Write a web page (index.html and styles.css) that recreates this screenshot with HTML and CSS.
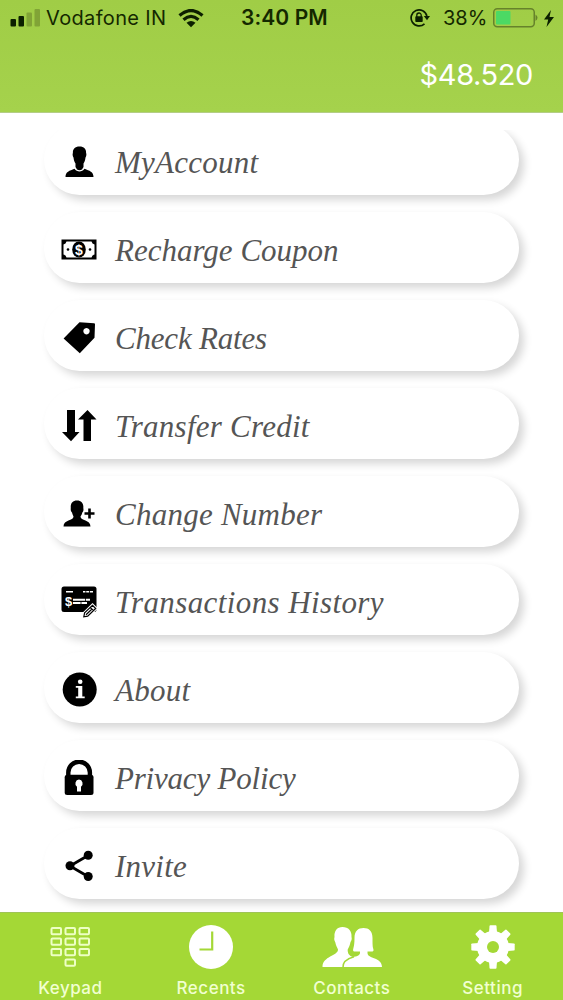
FILE: index.html
```html
<!DOCTYPE html>
<html lang="en">
<head>
    <meta charset="UTF-8">
    <meta name="viewport" content="width=device-width, initial-scale=1.0">
    <title>Setting</title>
    <link rel="stylesheet" href="styles.css">
</head>
<body>
    <header class="header">
        <div class="status">
            <svg class="signal" width="30" height="18" viewBox="0 0 30 18">
                <rect x="0.5" y="10" width="5.5" height="7.5" rx="1" fill="#0c2000"/>
                <rect x="8.5" y="7" width="5.5" height="10.5" rx="1" fill="#0c2000"/>
                <rect x="16.5" y="3.5" width="5.5" height="14" rx="1" fill="#81a436"/>
                <rect x="24.5" y="0" width="5.5" height="17.5" rx="1" fill="#81a436"/>
            </svg>
            <span class="carrier">Vodafone IN</span>
            <svg class="wifi" width="26" height="19" viewBox="0 0 26 19">
                <path d="M1.5 6.5Q13-3.5 24.5 6.5M5.5 10.7Q13 4.2 20.5 10.7" fill="none" stroke="#0c2000" stroke-width="3.2"/>
                <path d="M8.5 13.7Q13 10.3 17.5 13.7L13 18.3Z" fill="#0c2000"/>
            </svg>
            <span class="time">3:40 PM</span>
            <svg class="rotation" width="20" height="20" viewBox="0 0 20 20">
                <path d="M16.9 8A8 8 0 1 0 14.5 15.8" fill="none" stroke="#0c2000" stroke-width="1.7"/>
                <path d="M13.8 8H20L17 12.2Z" fill="#0c2000"/>
                <rect x="5.3" y="8.3" width="7.4" height="5.7" rx="0.8" fill="#0c2000"/>
                <path d="M6.8 9V7.2a2.2 2.2 0 0 1 4.4 0V9" fill="none" stroke="#0c2000" stroke-width="1.3"/>
            </svg>
            <span class="percent">38%</span>
            <svg class="battery" width="46" height="20" viewBox="0 0 46 20">
                <rect x="0.75" y="0.75" width="40.5" height="18" rx="3.5" fill="none" stroke="#66822b" stroke-width="1.5"/>
                <rect x="3" y="3" width="14.5" height="13.5" rx="1" fill="#4cd964"/>
                <path d="M42.5 6.5Q46.5 9.7 42.5 13Z" fill="#66822b"/>
            </svg>
            <svg class="bolt" width="10" height="17" viewBox="0 0 10 17">
                <path d="M7 0L0 9.5H4.2L2.5 17L10 7H5.5Z" fill="#0c2000"/>
            </svg>
        </div>
        <div class="balance">$48.520</div>
    </header>

    <main class="menu">
        <a class="item">
            <svg width="36" height="36" viewBox="0 0 36 36">
                <path d="M18.5 2.5C14 2.5 11.7 5 11.9 9C11.3 10 11.7 12.5 12.5 13.5C12.8 17 14 18.5 14.5 19.5V23L16 25.5Q18.5 27 21 25.5L22.5 23V19.5C23 18.5 24.2 17 24.5 13.5C25.3 12.5 25.7 10 25.1 9C25.3 5 23 2.5 18.5 2.5ZM4.5 33C4.5 27.8 8.5 26.8 13.5 24.8C16 28.3 21 28.3 23.5 24.8C28.5 26.8 32.5 27.8 32.5 33Z"/>
            </svg>
            <span>MyAccount</span>
        </a>
        <a class="item">
            <svg width="36" height="36" viewBox="0 0 36 36">
                <path d="M0.5 7.5H35.5V27.5H0.5Z"/>
                <path d="M5.5 9.5H30.5A4 4 0 0 0 33.5 12.5V22.5A4 4 0 0 0 30.5 25.5H5.5A4 4 0 0 0 2.5 22.5V12.5A4 4 0 0 0 5.5 9.5Z" fill="#fff"/>
                <ellipse cx="18" cy="17.5" rx="6.8" ry="8"/>
                <circle cx="7" cy="17.5" r="1.3"/>
                <circle cx="29" cy="17.5" r="1.3"/>
                <text class="bold" x="18" y="22.5" font-size="14" text-anchor="middle" fill="#fff">$</text>
            </svg>
            <span class="snug">Recharge Coupon</span>
        </a>
        <a class="item">
            <svg width="36" height="36" viewBox="0 0 36 36">
                <path fill-rule="evenodd" d="M18.5 2.2L33 3.2Q34 3.3 34 4.3L33.5 17.7L18.8 33.3L2.6 18.5ZM25.5 8a3.2 3.2 0 1 0 0.01 0Z"/>
            </svg>
            <span class="tight">Check Rates</span>
        </a>
        <a class="item">
            <svg width="36" height="36" viewBox="0 0 36 36">
                <path d="M6 2H14V24H18.5L10 33.3L1 24H6Z"/>
                <path d="M26.5 2L35.5 11.5H30V33H22.5V11.5H17Z"/>
            </svg>
            <span>Transfer Credit</span>
        </a>
        <a class="item">
            <svg width="36" height="36" viewBox="0 0 36 36">
                <path d="M16 4.5C11.5 4.5 9.3 7.5 9.8 12C9.4 14.5 10.3 15.8 11 16.5C11.5 19 12.5 19.7 12.5 20.5C12.5 25 2.5 23.5 2.5 30.5H29.5C29.5 23.5 19.5 25 19.5 20.5C20 19.5 21 18.5 21.3 16.5C22.2 15.5 22.8 14 22.3 12C22.8 7.5 20.5 4.5 16 4.5Z"/>
                <path d="M28.5 12.5V22.5M23.5 17.5H33.5" stroke="#000" stroke-width="2.6"/>
            </svg>
            <span>Change Number</span>
        </a>
        <a class="item">
            <svg width="36" height="36" viewBox="0 0 36 36">
                <rect x="0.5" y="2.5" width="35" height="25.5" rx="2.5"/>
                <path d="M5 7.7H12M22 7.7H32" stroke="#fff" stroke-width="1.6"/>
                <path d="M24.8 6V9M28.5 6V9" stroke="#000" stroke-width="0.8"/>
                <path d="M12 15.7H29M12 19H26" stroke="#fff" stroke-width="1.9"/>
                <path d="M20 17.5V20M24.5 14V17" stroke="#000" stroke-width="0.8"/>
                <text class="bold" x="7.5" y="21.5" font-size="13" text-anchor="middle" fill="#fff">$</text>
                <path d="M22.3 33.3L23.2 28.5L31.5 20.5L35.5 24.5L27 32.6Z" fill="#fff" stroke="#fff" stroke-width="2"/>
                <path d="M22.8 32.8L23.6 28.9L31.5 21.3L34.7 24.5L26.7 32.1ZM29.3 23.5L32.5 26.7M25 30.7L31 25" fill="none" stroke="#000" stroke-width="1.2"/>
            </svg>
            <span class="loose">Transactions History</span>
        </a>
        <a class="item">
            <svg width="36" height="36" viewBox="0 0 36 36">
                <circle cx="18.7" cy="17.5" r="17"/>
                <circle cx="19.2" cy="9.8" r="2.3" fill="#fff"/>
                <path d="M14.8 14H21.3V24.5H23.7V26.3H14.8V24.5H17.2V15.8H14.8Z" fill="#fff"/>
            </svg>
            <span>About</span>
        </a>
        <a class="item">
            <svg width="36" height="36" viewBox="0 0 36 36">
                <path d="M7.3 17V12.5a10.8 10.8 0 0 1 21.6 0V17" fill="none" stroke="#000" stroke-width="4.4"/>
                <rect x="3.7" y="14.8" width="28.8" height="20.2" rx="2.5"/>
                <path d="M18 19.5a4 4 0 0 1 2 7.2V31.5H16V26.7A4 4 0 0 1 18 19.5Z" fill="#fff"/>
            </svg>
            <span class="tight">Privacy Policy</span>
        </a>
        <a class="item">
            <svg width="36" height="36" viewBox="0 0 36 36">
                <path d="M27 7.5L9 18L27 28.5" fill="none" stroke="#000" stroke-width="2.8"/>
                <circle cx="27.2" cy="7.3" r="4.5"/>
                <circle cx="9" cy="17.8" r="4.5"/>
                <circle cx="27.2" cy="28.5" r="4.5"/>
            </svg>
            <span>Invite</span>
        </a>
    </main>

    <nav class="tabs">
        <a class="tab">
            <svg width="60" height="46" viewBox="0 0 60 46">
                <g fill="none" stroke="#edffc4" stroke-width="2">
                    <rect x="11.5" y="3" width="9.5" height="6.3" rx="1"/>
                    <rect x="25.5" y="3" width="9.5" height="6.3" rx="1"/>
                    <rect x="39.5" y="3" width="9.5" height="6.3" rx="1"/>
                    <rect x="11.5" y="13.5" width="9.5" height="6.3" rx="1"/>
                    <rect x="25.5" y="13.5" width="9.5" height="6.3" rx="1"/>
                    <rect x="39.5" y="13.5" width="9.5" height="6.3" rx="1"/>
                    <rect x="11.5" y="24" width="9.5" height="6.3" rx="1"/>
                    <rect x="25.5" y="24" width="9.5" height="6.3" rx="1"/>
                    <rect x="39.5" y="24" width="9.5" height="6.3" rx="1"/>
                    <rect x="25.5" y="34.5" width="9.5" height="6.3" rx="1"/>
                </g>
            </svg>
            <span>Keypad</span>
        </a>
        <a class="tab">
            <svg width="60" height="46" viewBox="0 0 60 46">
                <circle cx="30" cy="22" r="22" fill="#fff"/>
                <path d="M31.2 6.5V24.5H18.5" fill="none" stroke="#a4d836" stroke-width="2.2"/>
            </svg>
            <span>Recents</span>
        </a>
        <a class="tab">
            <svg width="60" height="46" viewBox="0 0 60 46">
                <path fill="#fff" d="M20.5 2C15 2 12 6 12.5 12C12 13.5 12.2 15.5 13.2 17C14 21 15.5 23 16 24.5C16 31 0.5 31 0.5 42H60C60 32 45.5 34 45.5 28V26.5H50.5C52 26 51.5 24.5 51 23C50.5 21 50.5 17 50.5 13C50.5 6 47 3 41.5 3C36 3 32.5 6 32.5 13C32.5 18 32 21 31.3 23.5C30.5 26 31.5 26.5 33 26.5H38V28C38 30.5 34.5 31.5 31 32C27 31 25.5 28 25.7 24.5C27 22 28 20 28.5 17C29.7 15.5 30 13.5 29.5 12C30 6 26.5 2 20.5 2Z"/>
                <path d="M21 42.5C20.5 36 26 33.5 32 31.8" fill="none" stroke="#a4d836" stroke-width="1.5"/>
            </svg>
            <span>Contacts</span>
        </a>
        <a class="tab">
            <svg width="60" height="46" viewBox="0 0 60 46">
                <g fill="#fff">
                    <circle cx="30" cy="22" r="16"/>
                    <path id="cog" d="M26 8L26.5 1Q26.6 0.3 27.3 0.3H32.7Q33.4 0.3 33.5 1L34 8V36L33.5 43Q33.4 43.7 32.7 43.7H27.3Q26.6 43.7 26.5 43L26 36Z"/>
                    <use href="#cog" transform="rotate(45 30 22)"/>
                    <use href="#cog" transform="rotate(90 30 22)"/>
                    <use href="#cog" transform="rotate(135 30 22)"/>
                </g>
                <circle cx="30" cy="22" r="6" fill="#a4d836"/>
            </svg>
            <span>Setting</span>
        </a>
    </nav>
</body>
</html>
```

FILE: styles.css
```css
* {
    margin: 0;
    padding: 0;
    box-sizing: border-box;
}

body {
    height: 1000px;
    display: flex;
    flex-direction: column;
    background-color: #fff;
    font-family: Inter, "Liberation Sans", sans-serif;
    overflow: hidden;
}

svg {
    display: block;
    flex: none;
}

.header {
    height: 113px;
    flex: none;
    background: linear-gradient(#a0cd46, #a5d24c);
    border-bottom: 1px solid #b4cd86;
}

.status {
    height: 36px;
    padding-left: 10px;
    display: flex;
    align-items: center;
    color: #142800;
    font-size: 20px;
    line-height: 36px;
    white-space: nowrap;
}

.carrier {
    width: 126px;
    margin-left: 6px;
    letter-spacing: 0.35px;
}

.wifi {
    margin-left: 6px;
}

.time {
    width: 88px;
    margin-left: 37px;
    font-size: 21px;
    font-weight: 600;
    letter-spacing: 0.1px;
}

.rotation {
    margin-left: 81px;
}

.percent {
    width: 46px;
    margin-left: 13px;
}

.battery {
    margin-left: 4px;
}

.bolt {
    margin-left: 5px;
}

.balance {
    padding-right: 30px;
    color: #fff;
    font-size: 29px;
    line-height: 77px;
    letter-spacing: -0.4px;
    text-align: right;
}

.menu {
    height: 782px;
    margin-top: 17px;
    flex: none;
    overflow: hidden;
}

.item {
    width: 475px;
    height: 71px;
    margin: 0 0 17px 44px;
    padding-left: 17px;
    display: flex;
    align-items: center;
    background-color: #fff;
    border-radius: 36px;
    box-shadow: 5px 5px 8px rgba(0, 0, 0, 0.16);
}

.item:first-child {
    margin-top: -6px;
}

.item svg {
    margin-top: 5px;
}

.item span {
    margin: 7px 0 0 18px;
    color: #555;
    font-family: Georgia, "Liberation Serif", serif;
    font-size: 31px;
    font-style: italic;
    letter-spacing: 0.25px;
    white-space: nowrap;
}

.item .tight {
    letter-spacing: -0.2px;
}

.item .snug {
    letter-spacing: 0;
}

.item .loose {
    letter-spacing: 0.4px;
}

.bold {
    font-family: "Liberation Sans", sans-serif;
    font-weight: bold;
}

.tabs {
    height: 88px;
    flex: none;
    display: grid;
    grid-template-columns: repeat(4, 1fr);
    background-color: #a4d836;
    border-top: 1px solid #9fc456;
}

.tab {
    padding-top: 12px;
    display: flex;
    flex-direction: column;
    align-items: center;
    color: #f1ffd0;
    font-size: 17px;
    font-weight: 500;
    letter-spacing: 0.5px;
}

.tab span {
    margin-top: 6px;
    line-height: 22px;
}
```
